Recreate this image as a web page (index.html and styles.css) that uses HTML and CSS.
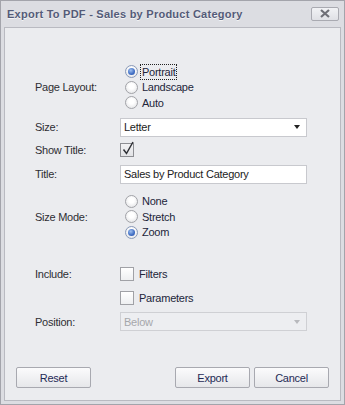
FILE: index.html
```html
<!DOCTYPE html>
<html>
<head>
<meta charset="utf-8">
<link rel="stylesheet" href="styles.css">
</head>
<body>
<div class="window">
  <div class="titlebar">
    <span class="title">Export To PDF - Sales by Product Category</span>
    <span class="close">
      <svg width="12" height="9" viewBox="0 0 12 9"><path d="M2 1 L10 8 M10 1 L2 8" stroke="#6f7077" stroke-width="2.2" fill="none"/></svg>
    </span>
  </div>
  <div class="panel">
    <div class="form">
      <div class="row r-layout">
        <span class="lbl">Page Layout:</span>
        <div class="radios">
          <div class="opt"><span class="radio on"></span><span class="txt focus">Portrait</span></div>
          <div class="opt"><span class="radio"></span><span class="txt">Landscape</span></div>
          <div class="opt"><span class="radio"></span><span class="txt">Auto</span></div>
        </div>
      </div>
      <div class="row r-size">
        <span class="lbl">Size:</span>
        <div class="combo"><span class="val">Letter</span><span class="arrow"></span></div>
      </div>
      <div class="row r-show">
        <span class="lbl">Show Title:</span>
        <span class="check on">
          <svg width="16" height="18" viewBox="0 0 16 18"><path d="M3.5 10.5 L6.5 14.5 L13 3" stroke="#2f3136" stroke-width="1.5" fill="none"/></svg>
        </span>
      </div>
      <div class="row r-title">
        <span class="lbl">Title:</span>
        <div class="input">Sales by Product Category</div>
      </div>
      <div class="row r-mode">
        <span class="lbl">Size Mode:</span>
        <div class="radios">
          <div class="opt"><span class="radio"></span><span class="txt">None</span></div>
          <div class="opt"><span class="radio"></span><span class="txt">Stretch</span></div>
          <div class="opt"><span class="radio on"></span><span class="txt">Zoom</span></div>
        </div>
      </div>
      <div class="row r-include">
        <span class="lbl">Include:</span>
        <div class="opt"><span class="check"></span><span class="txt">Filters</span></div>
      </div>
      <div class="row r-params">
        <span class="lbl"></span>
        <div class="opt"><span class="check"></span><span class="txt">Parameters</span></div>
      </div>
      <div class="row r-position">
        <span class="lbl">Position:</span>
        <div class="combo disabled"><span class="val">Below</span><span class="arrow"></span></div>
      </div>
    </div>
    <div class="buttons">
      <span class="btn">Reset</span>
      <span class="spacer"></span>
      <span class="btn">Export</span>
      <span class="btn">Cancel</span>
    </div>
  </div>
</div>
</body>
</html>
```
FILE: styles.css
```css
* { box-sizing: border-box; }
html, body { margin: 0; padding: 0; }
body {
  font-family: "Liberation Sans", Arial, sans-serif;
  font-size: 11px;
  letter-spacing: -0.25px;
  color: #2b2b2b;
  background: #ffffff;
}
.window {
  width: 345px;
  height: 405px;
  background: #dcdde2;
  border: 1px solid #a3a4ab;
  display: flex;
  flex-direction: column;
}
.titlebar {
  height: 26px;
  display: flex;
  align-items: center;
  justify-content: space-between;
  padding: 0 6px 1px 6px;
}
.title {
  font-weight: bold;
  font-size: 11px;
  letter-spacing: 0.25px;
  color: #545b78;
  text-shadow: 0 1px 0 rgba(255,255,255,0.7);
}
.close {
  width: 28px;
  height: 14px;
  margin-right: -1px;
  border: 1px solid #a9aab1;
  border-radius: 2px;
  background: linear-gradient(#f1f2f5, #dfe0e5);
  display: flex;
  align-items: center;
  justify-content: center;
}
.panel {
  flex: 1;
  margin: 0 3px 3px 3px;
  background: #ebecef;
  border: 1px solid #b9bac1;
  display: flex;
  flex-direction: column;
}
.form {
  flex: 1;
  padding: 36px 0 0 30px;
}
.row {
  display: flex;
  align-items: center;
}
.lbl {
  width: 85px;
  flex: none;
  color: #2e2e33;
}
.radios { display: flex; flex-direction: column; }
.opt {
  display: flex;
  align-items: center;
  height: 15.5px;
  color: #22253a;
}
.radio {
  width: 13px;
  height: 13px;
  border-radius: 50%;
  border: 1px solid #a2a3a8;
  background: radial-gradient(circle at 50% 40%, #ffffff 30%, #dcdde0 100%);
  margin-left: 5px;
  margin-right: 4px;
  display: flex;
  align-items: center;
  justify-content: center;
}
.radio.on {
  border-color: #8a9ab8;
}
.radio.on::after {
  content: "";
  width: 7px;
  height: 7px;
  border-radius: 50%;
  background: radial-gradient(circle at 40% 35%, #9fc0f0 0%, #3e6cc2 60%, #2c55a8 100%);
}
.txt { line-height: 14px; }
.txt.focus {
  outline: 1px dotted #222;
  outline-offset: 0;
  padding: 0 1px;
  margin-left: -1px;
}
.combo, .input {
  width: 187px;
  height: 19px;
  background: #ffffff;
  border: 1px solid #c8c9ce;
  display: flex;
  align-items: center;
  padding-left: 3px;
  color: #222;
}
.combo .val { flex: 1; }
.arrow {
  width: 0;
  height: 0;
  border-left: 3.5px solid transparent;
  border-right: 3.5px solid transparent;
  border-top: 4px solid #222;
  margin-right: 6px;
}
.combo.disabled {
  background: #edeef1;
  border-color: #cfd0d4;
  color: #a6a7ab;
}
.combo.disabled .arrow { border-top-color: #b8b9bd; }
.check {
  width: 14px;
  height: 14px;
  border: 1px solid #a0a1a6;
  background: linear-gradient(#ffffff, #eeeff1);
  margin-right: 5px;
  position: relative;
  flex: none;
}
.check.on {
  background: linear-gradient(#f2f2f4, #e2e3e6);
  border-color: #8d8e93;
}
.check.on svg {
  position: absolute;
  left: -1px;
  top: -5px;
}
.r-layout { margin-top: 0; }
.r-size { margin-top: 7px; }
.r-show { margin-top: 4px; height: 19px; }
.r-title { margin-top: 5px; }
.r-mode { margin-top: 10px; }
.r-include { margin-top: 26px; height: 16px; }
.r-include .opt, .r-params .opt { height: 16px; }
.r-params { margin-top: 8px; height: 16px; }
.r-position { margin-top: 6px; }
.buttons {
  display: flex;
  gap: 4px;
  padding: 0 11px 12px 11px;
}
.spacer { flex: 1; }
.btn {
  width: 75px;
  height: 21px;
  border: 1px solid #a8a9b0;
  border-radius: 2px;
  background: linear-gradient(#fbfbfc, #e6e7ea);
  display: flex;
  align-items: center;
  justify-content: center;
  color: #1f2a55;
}
```
